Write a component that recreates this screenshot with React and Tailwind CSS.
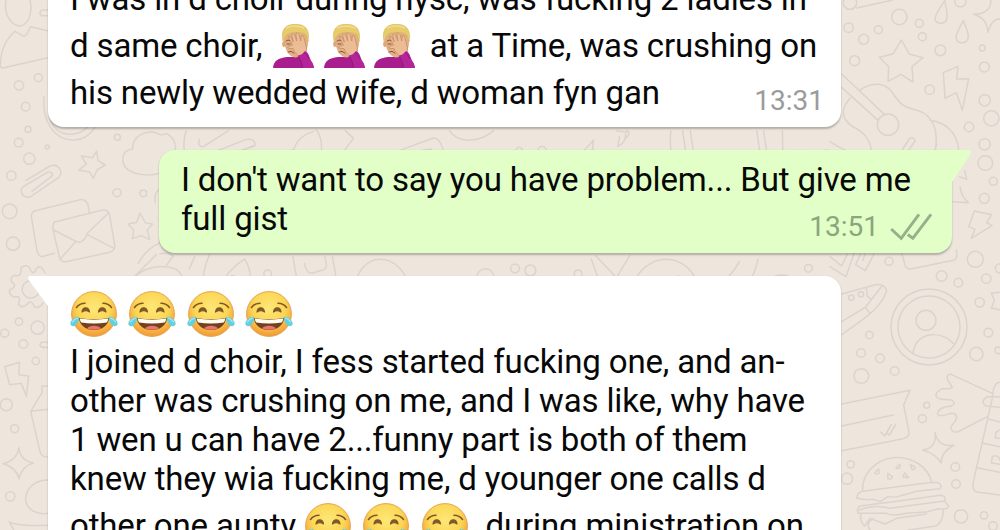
import React from "react";

const circles = (list) =>
  list.map(([x, y, r], i) => <circle key={i} cx={x} cy={y} r={r} />);

function Wallpaper() {
  return (
    <svg
      className="absolute inset-0 h-full w-full [&_*]:[vector-effect:non-scaling-stroke]"
      viewBox="0 0 1000 530"
      fill="none"
      stroke="#dbd4ce"
      strokeWidth="1.5"
      strokeLinecap="round"
      strokeLinejoin="round"
    >
      {/* left, upper */}
      <g transform="scale(.33333)">
        {circles([
          [57, 256, 14], [115, 233, 12], [77, 320, 13], [84, 388, 9], [56, 428, 13], [142, 441, 6],
          [88, 476, 17], [34, 527, 14], [29, 634, 22], [39, 731, 20], [352, 412, 9], [351, 578, 12], [430, 580, 10],
        ])}
        <path d="M18 0C10 45 35 78 62 78C88 72 98 35 90 0M150 30H125Q115 38 124 47H150M150 172L8 204Q0 204 1 190C3 145 20 115 45 94L72 109Q80 108 91 80L150 94" />
        <path d="M132 290C126 370 165 422 225 420C250 418 270 405 285 382M148 310C145 350 155 385 185 398C215 408 245 400 262 382" />
        <path d="M78 541L150 498C174 488 192 515 176 532L92 590C68 598 56 572 70 560L142 517Q156 513 158 526L96 574" />
        <path d="M290 453L278 473L244 468L259 492L236 511L268 515L280 535L292 509L316 495L294 482Z" />
        <path d="M480 520C445 530 395 525 375 500C360 475 372 448 398 448C395 415 428 388 470 398C480 408 490 405 500 401C525 415 530 440 524 450" />
        <path d="M163 760L124 770Q114 766 111 753L94 650Q94 635 106 632L240 599Q258 597 264 614L268 636M164 666L308 630Q326 628 329 646L344 735Q347 752 329 757L198 785Q182 788 178 770L159 688Q158 670 164 666ZM161 690L228 724C242 734 258 715 262 700L326 638M228 724L180 778M262 704L342 745" />
        <path d="M420 639L436 668L457 672L442 690L449 718L423 707L397 716L401 690L384 672L410 667Z" />
        <path d="M466 608Q460 580 478 568M415 790C430 762 452 740 482 728M480 762Q500 755 520 768L500 795" />
      </g>
      {/* strip between the first two bubbles */}
      <g transform="translate(100 120) scale(.4847)">
        <path d="M178 22C168 48 174 72 182 92M205 40Q200 57 215 54L265 22M208 77L302 40Q320 37 320 52L215 91M210 76Q200 88 222 86L318 54M320 91C355 76 380 69 400 61C405 42 420 30 440 24M446 20Q462 40 455 79L478 68L502 90L505 62L523 38L506 22M583 91C588 73 600 71 625 60L688 37C706 38 710 65 711 91M600 88L655 64L684 60L665 86M631 78L655 70M721 22C738 50 785 46 812 22M783 92L788 72M988 75L1018 42L1013 89L988 92ZM990 72L1018 60M1065 22L1085 25Q1085 50 1068 54L1072 34M1086 22Q1098 25 1085 37M1178 22Q1173 55 1185 91M1202 22L1212 91M1218 22L1228 91M1355 22L1365 91M1369 22L1379 91M1408 22L1409 91" />
        <ellipse cx="865" cy="69" rx="8" ry="13" />
        <ellipse cx="912" cy="71" rx="11" ry="17" />
        {circles([[1444, 71, 8], [1499, 74, 12], [1499, 74, 6]])}
        <path d="M1505 78L1535 92" />
      </g>
      {/* strip between the last two bubbles */}
      <g transform="translate(0 248) scale(.5485)">
        <path d="M232 82C242 35 288 28 320 38C338 50 336 70 330 82M245 52L285 12M345 38L355 16M368 82C370 52 372 32 382 12M398 82C405 52 430 30 446 20Q462 45 454 82M408 82C416 42 430 45 432 62L428 82M534 16L545 78Q548 86 560 80L608 64Q614 60 611 42L606 16M555 28Q560 50 572 45L592 39Q598 35 592 16M645 82C650 0 735 0 750 82M1078 20L1100 82M1086 14L1124 54L1148 14M1148 82C1170 0 1260 0 1278 82M1292 82C1320 60 1335 50 1348 25M1340 80Q1372 70 1382 20M1390 82C1395 38 1455 38 1460 82M1400 62L1450 80M1425 50V80" />
        {circles([[488, 47, 7], [819, 71, 9], [885, 54, 16], [939, 37, 8], [967, 41, 10], [1054, 47, 7], [1236, 57, 6], [1474, 37, 7], [508, 84, 9]])}
      </g>
      {/* left, lower */}
      <g transform="translate(0 260) scale(.33333)">
        <path d="M135 38L124 22Q115 18 110 26L102 38Q94 40 88 22Q78 12 64 22L62 40Q58 50 44 46Q30 50 34 64L44 75Q44 84 29 89Q26 102 38 110L55 110Q62 116 55 132Q64 145 76 137L88 126Q98 125 102 140Q118 148 130 128M89 62A26 26 0 1 0 115 101" />
        {circles([[57, 185, 11], [14, 220, 12], [70, 252, 13], [113, 203, 20], [107, 303, 11], [19, 434, 18], [44, 506, 12], [31, 709, 14]])}
        <path d="M145 248Q118 242 120 256Q124 265 145 262M14 320L58 307L57 344L86 348L79 409L64 370L29 374ZM145 378H126V398L92 454L145 448M92 454L120 575Q124 592 145 592M57 563Q60 602 100 609Q65 618 57 657Q52 625 10 611Q50 602 57 563ZM145 660C105 660 75 685 77 722C82 750 110 765 145 760M28 785Q50 800 145 796M28 785L42 812" />
      </g>
      {/* right, upper */}
      <g transform="translate(830) scale(.33333)">
        {circles([
          [208, 51, 23], [56, 83, 14], [101, 118, 15], [145, 89, 12], [74, 182, 15], [268, 70, 12], [277, 110, 12],
          [331, 151, 16], [391, 4, 17], [299, 269, 14], [457, 144, 9], [463, 201, 15], [464, 301, 17], [484, 355, 23],
          [417, 381, 14], [464, 433, 17], [466, 489, 22], [490, 544, 12], [463, 595, 15], [174, 374, 32], [60, 8, 20],
        ])}
        <path d="M80 24L188 0M344 2C325 30 314 48 315 58Q318 70 333 70Q350 68 351 52Q352 30 344 2ZM400 62C385 90 377 102 378 114Q382 130 399 128Q415 126 415 108Q413 92 400 62ZM483 0Q483 42 430 43Q470 52 474 97Q485 54 512 57M214 120L238 162L279 173L246 200L249 246L213 223L174 244L176 200L148 172L190 161Z" />
        <path d="M340 218L384 199L380 237L416 236L397 331L379 278L345 295ZM35 222L164 344M35 262L144 361M87 272C130 240 170 250 190 282C220 326 228 320 265 332C308 345 326 390 316 450M300 361C350 368 382 400 386 450M60 295C30 330 35 355 65 378C98 395 118 412 124 450M0 425Q22 440 45 450M216 450L238 417Q250 408 256 422L236 450M320 432L315 450M404 512L410 538L388 530M390 560Q395 592 415 608L368 605M433 633L485 644L470 668L486 677L424 715L435 688L416 680Z" />
      </g>
      {/* right, lower */}
      <g transform="translate(830 250) scale(.33333)">
        {circles([
          [436, 28, 24], [177, 34, 12], [335, 78, 16], [385, 98, 13], [469, 86, 14], [510, 55, 14], [449, 157, 14],
          [475, 248, 13], [439, 312, 20], [505, 301, 10], [118, 255, 11], [93, 309, 13], [150, 325, 13], [194, 363, 13],
          [94, 378, 22], [297, 231, 114], [297, 231, 93], [288, 211, 30], [290, 466, 9], [277, 506, 12], [62, 643, 11],
          [51, 686, 17], [376, 651, 13], [378, 702, 13], [393, 799, 20], [462, 796, 11], [489, 828, 13], [64, 143, 8], [93, 133, 8],
        ])}
        <path d="M249 308C260 246 330 238 371 281M0 50L48 80L72 10M0 20L35 48L52 12M92 12L77 44L106 62L132 12M105 12L98 32M216 12L226 48Q232 60 246 56L370 31Q385 27 379 0M35 132L136 104Q164 100 170 123C150 180 95 210 35 254M35 215L106 172L156 108M109 115L112 138L123 148M106 172L120 190M510 127L484 129L493 151L484 175L510 179" />
        <path d="M35 462L240 421L221 465L237 547Q237 562 220 566L35 602M35 528L190 495M152 546L164 558L184 524M170 550L179 555L198 522M487 430L363 373Q348 372 352 388L367 412Q360 418 337 416Q313 428 319 440Q325 450 361 449Q382 458 365 468L344 471Q320 480 323 493Q330 503 360 490Q390 490 375 514L363 530Q362 548 382 546L472 500M315 547Q325 594 372 585Q332 607 334 639Q315 610 278 600Q322 593 315 547Z" />
        <path d="M510 397Q490 397 488 440L430 695Q425 720 440 726L510 735M510 440H472Q448 455 468 468L510 472M473 506L510 516M460 580L510 590M444 654L510 667M510 540Q492 545 497 565H510M484 639L487 620Q504 612 510 630M484 639L510 643" />
        <path d="M98 722C95 672 136 630 188 623C247 618 293 650 306 697L325 698Q338 705 330 716L260 724Q220 735 202 740L172 741L150 755L132 748Q102 752 80 744Q82 728 98 724L306 697M90 768L190 755L330 736Q352 738 343 753L356 768Q355 780 325 776L290 786L230 790Q185 800 170 790L85 790Q78 775 90 768ZM343 753L180 775Q130 762 88 780M93 790Q88 815 104 828L120 805L165 822L200 805L290 792M340 780Q340 815 318 828L235 840M120 840Q105 820 130 806" />
        <path d="M146 656L134 669Q142 676 147 669ZM209 643L198 654Q207 658 211 651ZM241 643L246 659Q256 660 255 651ZM173 670L174 686Q186 690 187 680ZM224 668L219 681L236 683Z" />
      </g>
    </svg>
  );
}

function Joy() {
  return (
    <svg viewBox="0 0 48 46" className="h-[46px] w-[48px] shrink-0">
      <defs>
        <radialGradient id="joyFace" cx=".5" cy=".36" r=".66">
          <stop offset="0" stopColor="#fee778" />
          <stop offset=".55" stopColor="#fbd755" />
          <stop offset=".82" stopColor="#f6ae3e" />
          <stop offset="1" stopColor="#ef9434" />
        </radialGradient>
      </defs>
      <circle cx="24" cy="23" r="22.4" fill="url(#joyFace)" stroke="#e6a354" strokeWidth="1" />
      <path d="M6.5 16.5Q9.5 12.2 15 12.2M33 12.2Q38.5 12.2 41.5 16.5" fill="none" stroke="#80582a" strokeWidth="1.6" strokeLinecap="round" />
      <path d="M12 21Q12.4 16.8 15.7 16.8Q19 16.8 19.5 21Q15.7 18.5 12 21ZM28.5 21Q29 16.8 32.3 16.8Q35.6 16.8 36 21Q32.3 18.5 28.5 21Z" fill="#80582a" stroke="#80582a" strokeWidth="1.2" strokeLinejoin="round" />
      <path d="M9 27Q24 29.500 39 27C38.6 34.500 32 39 24 39S9.400 34.500 9 27Z" fill="#75401f" />
      <path d="M9.8 27.5Q24 29.8 38.2 27.5Q38 30 36.8 31.4Q24 33.6 11.2 31.4Q10 30 9.8 27.5Z" fill="#fffdf3" />
      <path d="M17 37.4Q19 34.7 24 34.7T31 37.4Q24 40 17 37.4Z" fill="#e8766b" />
      <path d="M9.5 26C5.5 25.3 1.5 28 .5 31.5C-.3 35 3.5 36.3 6.2 34C8.500 32 8.700 29 9.5 26ZM38.5 26C42.5 25.3 46.5 28 47.5 31.5C48.3 35 44.5 36.3 41.8 34C39.5 32 39.3 29 38.5 26Z" fill="#63cfe0" />
      <path d="M7.5 27.2Q4 28 2.500 31M40.5 27.2Q44 28 45.5 31" fill="none" stroke="#a5e9ef" strokeWidth="1.2" strokeLinecap="round" />
    </svg>
  );
}

function Facepalm() {
  return (
    <svg viewBox="0 0 42 44" className="h-[44px] w-[42px] shrink-0">
      <path d="M0 44C.5 37 5 34 14 33H27L37 36Q40.500 38.500 41 44Z" fill="#a91d8e" />
      <path d="M11 16C10 6 14 2 22 2S35 6 35 16Q35.500 33 22 33.500Q12.500 32 11 16Z" fill="#e3b085" />
      <path d="M10 17C7.500 5 13 .3 22 .3S37.500 4 35 18L33 11Q31 8.500 24 8.500Q14 8 12.500 13Z" fill="#e8cb6a" stroke="#d4b458" strokeWidth=".6" />
      <path d="M13 4Q22 0 31 4" stroke="#f1de8b" strokeWidth="1.5" fill="none" />
      <ellipse cx="10.8" cy="20" rx="1.600" ry="3" fill="#dda578" />
      <path d="M13 17Q15 15 17 16.500M14 20H17M15 28Q18 26 21 29" stroke="#895435" strokeWidth="1" fill="none" strokeLinecap="round" />
      <path d="M15.2 12.5Q17 11.500 18.2 14L20.4 18L18.500 10.5Q20 8.500 21.500 11L23.8 17L22.8 9.5Q24.500 7.700 26 10.5L27.8 17L28.3 11.5Q30.5 10.500 31 14L33.5 24Q34.500 29 30 32L25 31.5Q21 28 20 24.5Q15 25 14.5 23.5Q15.500 22 19.5 21Z" fill="#ecbc94" stroke="#c08a64" strokeWidth=".7" strokeLinejoin="round" />
      <path d="M25 31.5Q29 31 32 27Q35 28 36.5 33L41 44H29.500Q29 37 25 31.5Z" fill="#b42599" />
      <path d="M25 32Q29 37 29.500 44M31 28.200Q34 31 36 35" fill="none" stroke="#8b1678" strokeWidth=".8" />
    </svg>
  );
}

function Ticks() {
  return (
    <svg viewBox="0 0 42 28" className="h-[28px] w-[42px]" fill="none" stroke="#93b18a" strokeWidth="2.9">
      <path d="M1.2 16L11.2 25.3L29 1.3M17.8 21.5L22.8 25.3L41 1.3" />
    </svg>
  );
}

const line = "flex h-[39px] items-end whitespace-nowrap";
const tall = "flex h-[47px] items-end whitespace-nowrap";

export default function App() {
  return (
    <main className="relative isolate h-[530px] w-[1000px] overflow-hidden bg-[#eee6dd] font-['Roboto',sans-serif] text-[33px] leading-[39px] tracking-[-0.15px] text-[#080808]">
      <Wallpaper />
      <div className="relative flex flex-col gap-[23px]">
        <section className="-mt-[40px] ml-[48px] flex h-[167px] w-[793px] flex-col rounded-[16px] bg-white pt-[19px] pl-[22px] shadow-[0_1.5px_2px_rgba(0,0,0,0.25)]">
          <div className={line}>I was in d choir during nysc, was fucking 2 ladies in</div>
          <div className={tall}>
            <span>d same choir,</span>
            <span className="mb-[-3px] ml-[11px] flex gap-[8.2px]"><Facepalm /><Facepalm /><Facepalm /></span>
            <span className="ml-[14px]">at a Time, was crushing on</span>
          </div>
          <div className="flex h-[47px] items-end justify-between pr-[17px] whitespace-nowrap">
            <span>his newly wedded wife, d woman fyn gan</span>
            <time className="mb-[-7px] text-[28px] leading-[36px] tracking-normal text-[#9b9b9b]">13:31</time>
          </div>
        </section>

        <section className="relative ml-[159px] flex h-[103px] w-[793px] flex-col rounded-[16px] rounded-tr-none bg-[#e1ffc7] pt-[10px] pl-[22px] shadow-[0_1.5px_2px_rgba(0,0,0,0.25)]">
          <svg viewBox="0 0 22 34" className="absolute top-0 left-[792px] h-[34px] w-[22px]">
            <path d="M0 0H17Q22 0 19 5L1 32V34H0Z" fill="#e1ffc7" />
          </svg>
          <div className={line}>I don't want to say you have problem... But give me</div>
          <div className="flex h-[39px] items-end justify-between pr-[20px] whitespace-nowrap">
            <span>full gist</span>
            <span className="mb-[-7px] flex items-center gap-[11px]">
              <time className="text-[28px] leading-[36px] tracking-normal text-[#8ba57c]">13:51</time>
              <Ticks />
            </span>
          </div>
        </section>

        <section className="relative ml-[48px] flex h-[300px] w-[793px] flex-col rounded-[16px] rounded-tl-none bg-white pt-[15px] pl-[22px] shadow-[0_1.5px_2px_rgba(0,0,0,0.25)]">
          <svg viewBox="0 0 22 32" className="absolute top-0 -left-[20px] h-[32px] w-[22px]">
            <path d="M22 0H3Q-2 0 1.5 5L20 30H22Z" fill="#fff" />
          </svg>
          <div className="flex h-[51px] gap-[10.3px]"><Joy /><Joy /><Joy /><Joy /></div>
          <div className={line}>I joined d choir, I fess started fucking one, and an-</div>
          <div className={line}>other was crushing on me, and I was like, why have</div>
          <div className={line}>1 wen u can have 2...funny part is both of them</div>
          <div className={line}>knew they wia fucking me, d younger one calls d</div>
          <div className={tall}>
            <span>other one aunty</span>
            <span className="mb-[-4px] ml-[8px] flex gap-[10.3px]"><Joy /><Joy /><Joy /></span>
            <span className="ml-[17px]">during ministration on</span>
          </div>
        </section>
      </div>
    </main>
  );
}
